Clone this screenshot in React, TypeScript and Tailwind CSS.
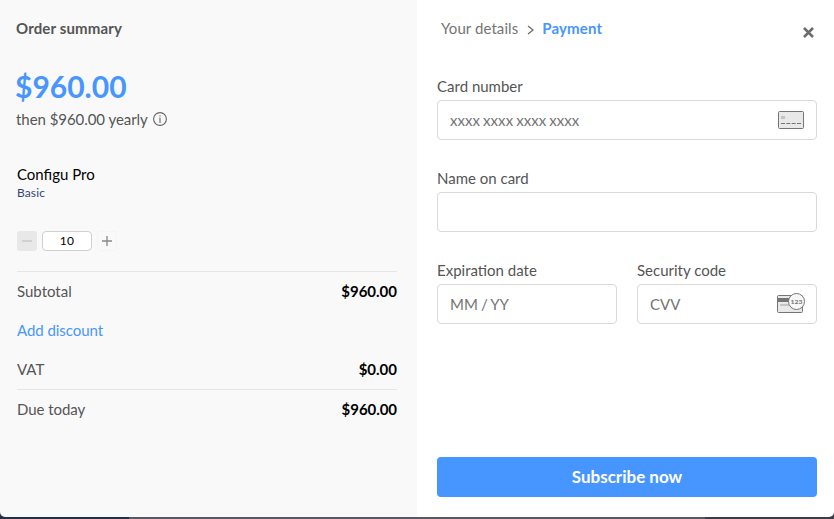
import React from "react";

function InfoIcon() {
  return (
    <svg width="14" height="14" viewBox="0 0 14 14" fill="none" stroke="#666" strokeWidth="1.1">
      <circle cx="7" cy="7" r="6.4" />
      <path d="M7 5.8v4.6" />
      <path d="M5.9 6.1H7M5.7 10.4h2.6" stroke="#999" strokeWidth="0.6" />
      <circle cx="7" cy="3.9" r="0.7" fill="#666" stroke="none" />
    </svg>
  );
}

function CardIcon() {
  return (
    <svg width="26" height="18" viewBox="0 0 26 18" fill="none">
      <rect x="0.5" y="0.5" width="25" height="17" rx="1" fill="#e8e8e8" stroke="#757575" />
      <rect x="3" y="5" width="4" height="3" fill="#c4c4c4" />
      <path d="M3 12.5h20" stroke="#757575" strokeDasharray="4 1.33" />
    </svg>
  );
}

function CvvIcon() {
  return (
    <svg className="-mr-px mb-[2px]" width="28" height="20" viewBox="0 0 28 20" fill="none">
      <rect x="0.5" y="2.5" width="25" height="17" rx="1" fill="#e8e8e8" stroke="#757575" />
      <path d="M1 5h24v4H1z" fill="#757575" />
      <path d="M3 12h9" stroke="#c4c4c4" strokeWidth="2" />
      <circle cx="19.5" cy="8.5" r="8" fill="#f7f7f7" stroke="#757575" />
      <text x="19.6" y="10.6" textAnchor="middle" fontSize="6" fontWeight="700" fill="#757575" textLength="12" lengthAdjust="spacingAndGlyphs" className="font-['Lato']">
        123
      </text>
    </svg>
  );
}

function Row({ label, value }: { label: string; value: string }) {
  return (
    <div className="flex h-[39px] items-center justify-between">
      <span>{label}</span>
      <span className="font-bold text-black">{value}</span>
    </div>
  );
}

function Field({ label, placeholder, icon }: { label: string; placeholder?: string; icon?: React.ReactNode }) {
  return (
    <label className="flex min-w-0 flex-1 flex-col">
      <span className="mb-1 h-5 leading-5">{label}</span>
      <span className="flex h-10 items-center rounded border border-[#d9d9d9] bg-white px-3">
        <input className="w-0 flex-1 bg-transparent tracking-[0.05px] [word-spacing:-0.9px] outline-none placeholder:text-[#757575]" placeholder={placeholder} />
        {icon}
      </span>
    </label>
  );
}

function Summary() {
  return (
    <section className="flex w-[417px] flex-col bg-[#f9f9f9] pr-5 pl-4">
      <h2 className="mt-[18px] h-5 font-bold leading-5 tracking-[0.15px]">Order summary</h2>
      <div className="mt-7 -ml-px h-10 text-[30px] font-bold leading-10 text-[#4796ff]">$960.00</div>
      <div className="mt-[3px] flex h-5 items-center gap-[5px] leading-5 tracking-[-0.05px]">
        then $960.00 yearly
        <InfoIcon />
      </div>
      <div className="mt-[35px] flex flex-col pl-px">
        <div className="h-[21px] leading-5 text-black">Configu Pro</div>
        <div className="h-4 text-xs leading-4 tracking-[0.12px] text-[#34457a]">Basic</div>
        <div className="mt-[30px] flex h-5">
          <button className="flex w-5 items-center justify-center rounded-[3px] bg-[#e8e8e8]">
            <svg width="10" height="10" stroke="#c8c8c8" strokeWidth="1.4"><path d="M0 5h10" /></svg>
          </button>
          <div className="ml-[5px] w-[50px] rounded border border-[#d0d0d0] bg-white text-center text-xs leading-[18px] tracking-[0.2px] text-black">10</div>
          <button className="ml-[5px] flex w-5 items-center justify-center rounded-[3px] border border-[#f5f5f5]">
            <svg width="10" height="10" stroke="#888" strokeWidth="1.3"><path d="M0 5h10M5 0v10" /></svg>
          </button>
        </div>
        <div className="mt-5 border-t border-[#e6e6e6]">
          <Row label="Subtotal" value="$960.00" />
          <div className="flex h-[39px] items-center tracking-[-0.05px] text-[#4796ff]">Add discount</div>
          <Row label="VAT" value="$0.00" />
        </div>
        <div className="border-t border-[#e6e6e6] tracking-[-0.05px]">
          <Row label="Due today" value="$960.00" />
        </div>
      </div>
    </section>
  );
}

function Payment() {
  return (
    <section className="flex w-[417px] flex-col bg-white pr-[17px] pb-5 pl-5">
      <header className="mt-[18px] flex h-5 items-center pl-1 leading-5">
        <span className="tracking-[0.08px] text-[#757575]">Your details</span>
        <svg className="mt-[3px] ml-[9px]" width="7" height="10" fill="none" stroke="#666" strokeWidth="1.2">
          <path d="M1 1l5 4-5 4" />
        </svg>
        <span className="ml-2 font-bold tracking-[0.15px] text-[#4796ff]">Payment</span>
        <button className="mt-[8px] mr-[3px] ml-auto">
          <svg width="11" height="11" stroke="#6b6b6b" strokeWidth="2.5">
            <path d="M1 1l9 9M10 1L1 10" />
          </svg>
        </button>
      </header>
      <form className="mt-[38px] flex flex-1 flex-col">
        <div className="flex"><Field label="Card number" placeholder="xxxx xxxx xxxx xxxx" icon={<CardIcon />} /></div>
        <div className="mt-7 flex"><Field label="Name on card" /></div>
        <div className="mt-7 flex gap-5">
          <Field label="Expiration date" placeholder="MM / YY" />
          <Field label="Security code" placeholder="CVV" icon={<CvvIcon />} />
        </div>
        <button type="button" className="mt-auto h-10 rounded bg-[#4796ff] text-[17px] font-bold text-white">Subscribe now</button>
      </form>
    </section>
  );
}

export default function App() {
  return (
    <div className="h-[519px] w-[834px] bg-[linear-gradient(90deg,#242e49_0,#242e49_129px,#595864_129px,#595864_705px,#3d3c48_705px)] font-['Lato',sans-serif] text-[15px] text-[#555]">
      <main className="flex h-[517px] overflow-hidden rounded-b-[5px]">
        <Summary />
        <Payment />
      </main>
    </div>
  );
}
